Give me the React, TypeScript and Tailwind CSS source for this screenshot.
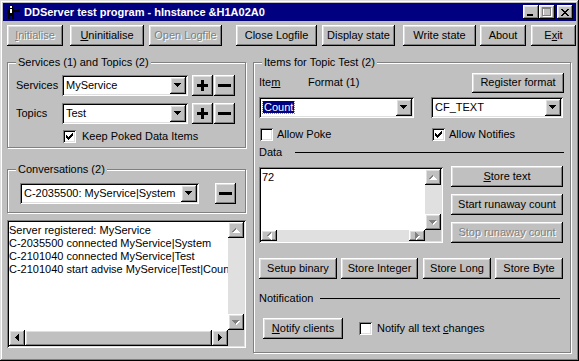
import React from "react";

const RAISED =
  "bg-[#c0c0c0] shadow-[inset_-1px_-1px_#000,inset_1px_1px_#fff,inset_-2px_-2px_#808080,inset_2px_2px_#dfdfdf]";
const SUNKEN =
  "shadow-[inset_1px_1px_#808080,inset_-1px_-1px_#fff,inset_2px_2px_#000,inset_-2px_-2px_#dfdfdf]";
const DIS = "text-[#808080] [text-shadow:1px_1px_0_#fff]";

function Tri({ dir, disabled }: { dir: "up" | "down" | "left" | "right"; disabled?: boolean }) {
  const fill = disabled ? "#808080" : "#000";
  const rows = [7, 5, 3, 1];
  const rects: JSX.Element[] = [];
  const vertical = dir === "up" || dir === "down";
  rows.forEach((len, i) => {
    const off = (7 - len) / 2;
    const pos = dir === "down" || dir === "right" ? i : 3 - i;
    if (vertical) {
      if (disabled)
        rects.push(<rect key={"s" + i} x={off + 1} y={pos + 1} width={len} height={1} fill="#fff" />);
      rects.push(<rect key={i} x={off} y={pos} width={len} height={1} fill={fill} />);
    } else {
      if (disabled)
        rects.push(<rect key={"s" + i} x={pos + 1} y={off + 1} width={1} height={len} fill="#fff" />);
      rects.push(<rect key={i} x={pos} y={off} width={1} height={len} fill={fill} />);
    }
  });
  return (
    <svg width={vertical ? 8 : 5} height={vertical ? 5 : 8} shapeRendering="crispEdges">
      {rects}
    </svg>
  );
}

function Btn({
  className = "",
  disabled,
  children,
}: {
  className?: string;
  disabled?: boolean;
  children: React.ReactNode;
}) {
  return (
    <div
      className={`${RAISED} flex items-center justify-center shrink-0 whitespace-nowrap ${
        disabled ? DIS : "text-black"
      } ${className}`}
    >
      {children}
    </div>
  );
}

function Combo({ className = "", children }: { className?: string; children: React.ReactNode }) {
  return (
    <div className={`${SUNKEN} bg-white h-[21px] flex items-center p-[2px] shrink-0 ${className}`}>
      <div className="flex-1 min-w-0 pl-[2px] whitespace-nowrap overflow-hidden">{children}</div>
      <div className={`${RAISED} w-[16px] h-[17px] flex items-center justify-center`}>
        <Tri dir="down" />
      </div>
    </div>
  );
}

function Check({ checked }: { checked?: boolean }) {
  const cols: [number, number][] = [
    [0, 2],
    [1, 3],
    [2, 4],
    [3, 3],
    [4, 2],
    [5, 1],
    [6, 0],
  ];
  return (
    <div className={`${SUNKEN} bg-white w-[13px] h-[13px] flex items-center justify-center shrink-0`}>
      {checked && (
        <svg width="7" height="7" shapeRendering="crispEdges">
          {cols.map(([x, y]) => (
            <rect key={x} x={x} y={y} width={1} height={3} fill="#000" />
          ))}
        </svg>
      )}
    </div>
  );
}

function Group({
  label,
  className = "",
  children,
}: {
  label: string;
  className?: string;
  children: React.ReactNode;
}) {
  return (
    <div
      className={`relative shrink-0 border border-[#808080] shadow-[inset_1px_1px_#fff,1px_1px_#fff] ${className}`}
    >
      <span className="absolute left-[8px] top-[-7px] px-[2px] bg-[#c0c0c0] leading-[13px] whitespace-nowrap">
        {label}
      </span>
      {children}
    </div>
  );
}

function SBtn({ dir, disabled }: { dir: "up" | "down" | "left" | "right"; disabled?: boolean }) {
  return (
    <div className={`${RAISED} w-[16px] h-[16px] flex items-center justify-center shrink-0`}>
      <Tri dir={dir} disabled={disabled} />
    </div>
  );
}

function PlusIcon() {
  return (
    <svg width="11" height="11" shapeRendering="crispEdges">
      <rect x="4" y="0" width="3" height="11" fill="#000" />
      <rect x="0" y="4" width="11" height="3" fill="#000" />
    </svg>
  );
}
function MinusIcon() {
  return (
    <svg width="13" height="3" shapeRendering="crispEdges">
      <rect x="0" y="0" width="13" height="3" fill="#000" />
    </svg>
  );
}

function TitleIcon() {
  return (
    <svg width="16" height="16" shapeRendering="crispEdges">
      <rect x="4" y="1" width="4" height="4" fill="#000" />
      <rect x="5" y="2" width="2" height="2" fill="#fff" />
      <rect x="3" y="5" width="6" height="7" fill="#000" />
      <rect x="5" y="5" width="2" height="4" fill="#fff" />
      <rect x="9" y="6" width="6" height="2" fill="#000" />
      <rect x="13" y="5" width="2" height="1" fill="#000" />
      <rect x="3" y="12" width="2" height="3" fill="#000" />
      <rect x="7" y="12" width="2" height="3" fill="#000" />
      <rect x="2" y="6" width="1" height="4" fill="#000" />
    </svg>
  );
}

function U({ children }: { children: React.ReactNode }) {
  return <span className="underline underline-offset-[1px]">{children}</span>;
}

export default function App() {
  return (
    <div className="w-[579px] h-[361px] bg-[#c0c0c0] p-[3px] flex flex-col text-[11px] leading-[13px] text-black font-['Liberation_Sans',Arial,sans-serif] shadow-[inset_-1px_-1px_#000,inset_1px_1px_#dfdfdf,inset_-2px_-2px_#808080,inset_2px_2px_#fff] overflow-hidden">
      {/* Title bar */}
      <div className="h-[18px] bg-[#000080] flex items-center pl-[2px] pr-[3px] shrink-0">
        <TitleIcon />
        <span className="ml-[3px] text-white font-bold whitespace-nowrap">
          DDServer test program - hInstance &amp;H1A02A0
        </span>
        <div className="flex-1" />
        <div className={`${RAISED} w-[16px] h-[14px] flex items-end pl-[4px] pb-[3px]`}>
          <div className="w-[6px] h-[2px] bg-black" />
        </div>
        <div className={`${RAISED} w-[16px] h-[14px] flex items-center justify-center`}>
          <svg width="10" height="10" shapeRendering="crispEdges">
            <rect x="1.5" y="1.5" width="8" height="8" fill="none" stroke="#fff" />
            <rect x="0.5" y="0.5" width="8" height="8" fill="none" stroke="#808080" />
            <rect x="0" y="1" width="9" height="1" fill="#808080" />
          </svg>
        </div>
        <div className={`${RAISED} ml-[2px] w-[16px] h-[14px] flex items-center justify-center`}>
          <svg width="8" height="7" shapeRendering="crispEdges">
            {[0, 1, 2, 3, 4, 5, 6].map((i) => (
              <React.Fragment key={i}>
                <rect x={i === 3 ? 3 : i < 3 ? i : i - 0} y={i} width={2} height={1} fill="#000" />
                <rect x={6 - i} y={i} width={2} height={1} fill="#000" />
              </React.Fragment>
            ))}
          </svg>
        </div>
      </div>

      {/* Toolbar */}
      <div className="flex mt-[4px] h-[21px] shrink-0">
        <Btn disabled className="ml-[4px] w-[56px] h-[21px]">
          <U>I</U>nitialise
        </Btn>
        <Btn className="ml-[7px] w-[74px] h-[21px]">
          <U>U</U>ninitialise
        </Btn>
        <Btn disabled className="ml-[5px] w-[73px] h-[21px]">
          Open Logfile
        </Btn>
        <Btn className="ml-[14px] w-[81px] h-[21px]">Close Logfile</Btn>
        <Btn className="ml-[5px] w-[73px] h-[21px]">Display state</Btn>
        <Btn className="ml-[8px] w-[73px] h-[21px]">Write state</Btn>
        <Btn className="ml-[4px] w-[46px] h-[21px]">About</Btn>
        <Btn className="ml-[5px] w-[45px] h-[21px]">
          E<U>x</U>it
        </Btn>
      </div>

      {/* Body */}
      <div className="flex mt-[16px] shrink-0">
        {/* Left column */}
        <div className="ml-[4px] w-[239px] flex flex-col">
          <Group label="Services (1) and Topics (2)" className="w-[239px] h-[86px] pl-[8px] pt-[12px]">
            <div className="flex items-center h-[21px]">
              <span className="w-[46px] shrink-0">Services</span>
              <Combo className="w-[126px]">MyService</Combo>
              <Btn className="ml-[4px] w-[21px] h-[21px]">
                <PlusIcon />
              </Btn>
              <Btn className="ml-[1px] w-[21px] h-[21px]">
                <MinusIcon />
              </Btn>
            </div>
            <div className="flex items-center h-[21px] mt-[7px]">
              <span className="w-[46px] shrink-0">Topics</span>
              <Combo className="w-[126px]">Test</Combo>
              <Btn className="ml-[4px] w-[21px] h-[21px]">
                <PlusIcon />
              </Btn>
              <Btn className="ml-[1px] w-[21px] h-[21px]">
                <MinusIcon />
              </Btn>
            </div>
            <div className="flex items-center mt-[6px] ml-[47px]">
              <Check checked />
              <span className="ml-[6px]">Keep Poked Data Items</span>
            </div>
          </Group>

          <Group label="Conversations (2)" className="mt-[21px] w-[239px] h-[44px] pl-[12px] pt-[13px]">
            <div className="flex items-center">
              <Combo className="w-[179px]">C-2035500: MyService|System</Combo>
              <Btn className="ml-[16px] w-[21px] h-[21px]">
                <MinusIcon />
              </Btn>
            </div>
          </Group>

          <div className={`${SUNKEN} bg-white mt-[7px] w-[239px] h-[128px] p-[2px] flex flex-col`}>
            <div className="flex flex-1 min-h-0">
              <div className="flex-1 min-w-0 pt-[2px] overflow-hidden whitespace-nowrap">
                <div>Server registered: MyService</div>
                <div>C-2035500 connected MyService|System</div>
                <div>C-2101040 connected MyService|Test</div>
                <div>C-2101040 start advise MyService|Test|Count</div>
              </div>
              <div className="w-[16px] flex flex-col bg-[#e0e0e0]">
                <SBtn dir="up" disabled />
                <div className="flex-1" />
                <SBtn dir="down" disabled />
              </div>
            </div>
            <div className="flex h-[16px]">
              <SBtn dir="left" />
              <div className={`${RAISED} flex-1`} />
              <SBtn dir="right" />
              <div className="w-[16px] bg-[#c0c0c0]" />
            </div>
          </div>
        </div>

        {/* Right group */}
        <Group label="Items for Topic Test (2)" className="ml-[7px] w-[318px] h-[291px] pl-[5px] pt-[9px]">
          <div className="flex items-center h-[21px]">
            <span className="w-[49px] shrink-0">
              Ite<U>m</U>
            </span>
            <span className="w-[164px] shrink-0">Format (1)</span>
            <Btn className="w-[92px] h-[20px]">Register format</Btn>
          </div>
          <div className="flex mt-[4px]">
            <Combo className="w-[155px]">
              <span className="bg-[#000080] text-white px-[1px] outline outline-1 outline-dotted outline-[#808080]">
                Count
              </span>
            </Combo>
            <Combo className="ml-[17px] w-[132px]">CF_TEXT</Combo>
          </div>
          <div className="flex items-center mt-[10px] ml-[1px]">
            <div className="w-[172px] flex items-center shrink-0">
              <Check />
              <span className="ml-[4px]">Allow Poke</span>
            </div>
            <Check checked />
            <span className="ml-[4px]">Allow Notifies</span>
          </div>
          <div className="flex items-center mt-[5px] h-[13px]">
            <span className="w-[36px] shrink-0">Data</span>
            <div className="w-[269px] h-px bg-black" />
          </div>
          <div className="flex mt-[7px]">
            <div className={`${SUNKEN} bg-white mt-[1px] w-[184px] h-[76px] p-[2px] flex flex-col shrink-0`}>
              <div className="flex flex-1 min-h-0">
                <div className="flex-1 pl-[1px] pt-[2px]">72</div>
                <div className="w-[16px] flex flex-col bg-[#e0e0e0]">
                  <SBtn dir="up" disabled />
                  <div className="flex-1" />
                  <SBtn dir="down" disabled />
                </div>
              </div>
              <div className="flex h-[11px] overflow-hidden">
                <div className="flex flex-1 bg-[#e0e0e0]">
                  <div className={`${RAISED} w-[16px] h-[11px] flex items-center justify-center`}>
                    <Tri dir="left" disabled />
                  </div>
                  <div className="flex-1" />
                  <div className={`${RAISED} w-[16px] h-[11px] flex items-center justify-center`}>
                    <Tri dir="right" disabled />
                  </div>
                </div>
                <div className="w-[16px] bg-[#c0c0c0]" />
              </div>
            </div>
            <div className="ml-[8px] flex flex-col gap-[7px]">
              <Btn className="w-[112px] h-[21px]">
                <U>S</U>tore text
              </Btn>
              <Btn className="w-[112px] h-[21px]">Start runaway count</Btn>
              <Btn disabled className="w-[112px] h-[21px]">
                Stop runaway count
              </Btn>
            </div>
          </div>
          <div className="flex mt-[15px]">
            <Btn className="w-[78px] h-[21px]">Setup binary</Btn>
            <Btn className="ml-[4px] w-[77px] h-[21px]">Store Integer</Btn>
            <Btn className="ml-[5px] w-[68px] h-[21px]">Store Long</Btn>
            <Btn className="ml-[4px] w-[68px] h-[21px]">Store Byte</Btn>
          </div>
          <div className="flex items-center mt-[13px] h-[13px]">
            <span className="w-[61px] shrink-0">Notification</span>
            <div className="w-[240px] h-px bg-black" />
          </div>
          <div className="flex items-center mt-[13px] ml-[4px]">
            <Btn className="w-[80px] h-[21px]">
              <U>N</U>otify clients
            </Btn>
            <div className="ml-[16px]">
              <Check />
            </div>
            <span className="ml-[5px]">
              Notify all text <U>c</U>hanges
            </span>
          </div>
        </Group>
      </div>
    </div>
  );
}
